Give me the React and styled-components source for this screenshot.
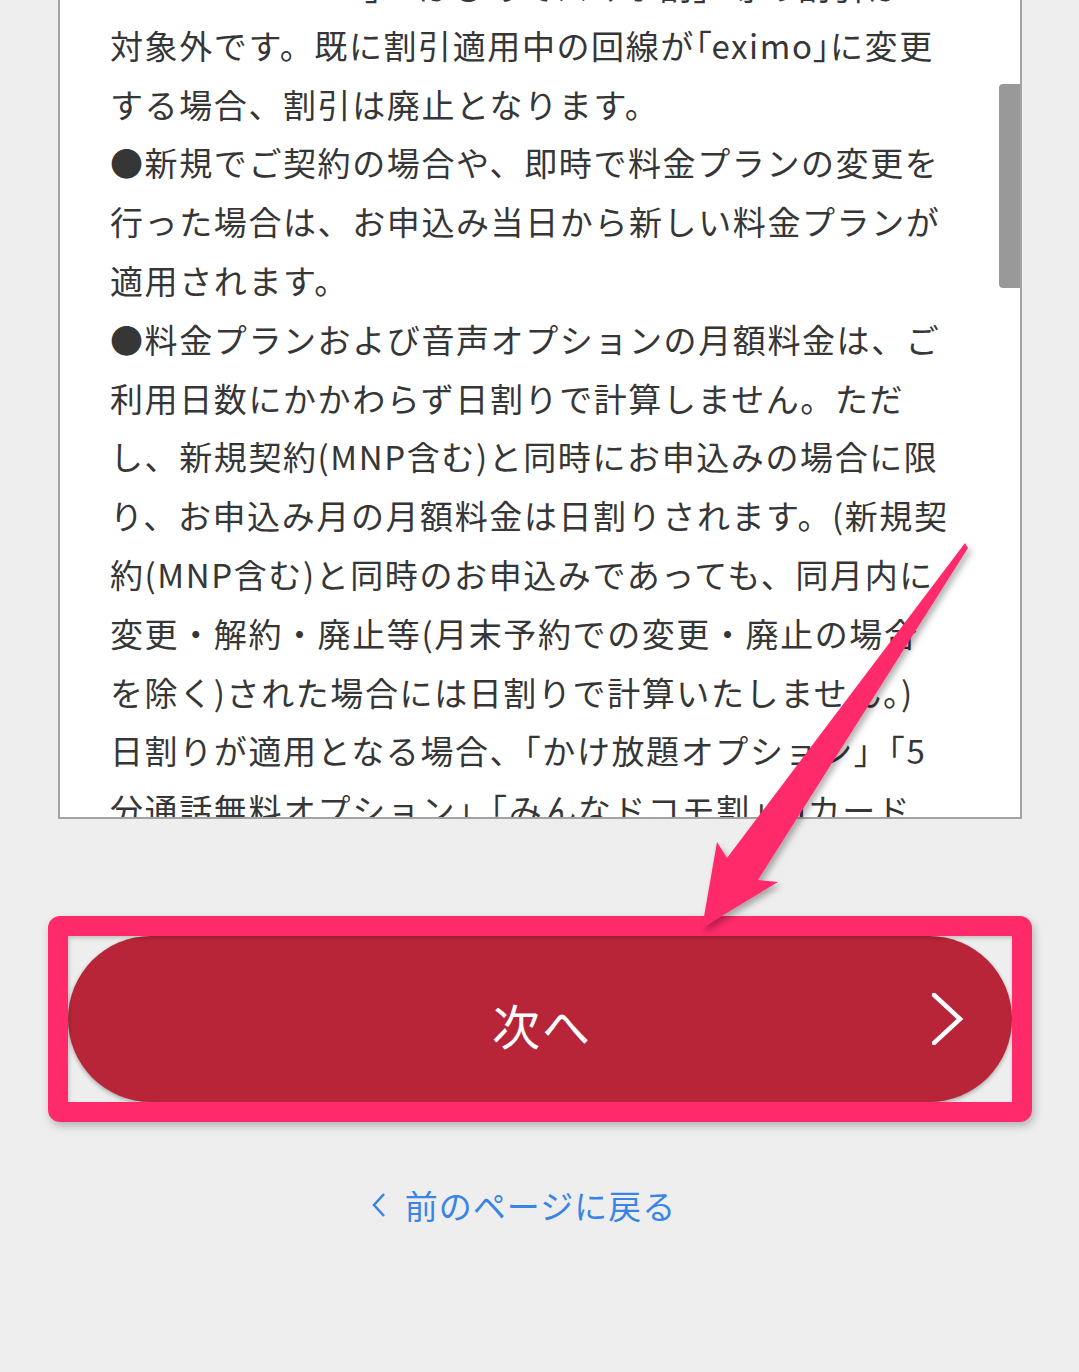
import React from 'react';
import styled, { createGlobalStyle } from 'styled-components';

const GlobalStyle = createGlobalStyle`
  html, body {
    margin: 0;
    padding: 0;
    background: #eeeeee;
  }
  body {
    font-family: "Noto Sans CJK JP", "Noto Sans", sans-serif;
  }
`;

// 約款テキスト（スクロール途中の表示）
const termsLines = [
  '「docomo with」「はじめてスマホ割」等の割引は',
  <>
    対象外です。既に割引適用中の回線が<Prop>「</Prop>eximo<Prop>」</Prop>に変更
  </>,
  'する場合、割引は廃止となります。',
  '●新規でご契約の場合や、即時で料金プランの変更を',
  '行った場合は、お申込み当日から新しい料金プランが',
  '適用されます。',
  '●料金プランおよび音声オプションの月額料金は、ご',
  '利用日数にかかわらず日割りで計算しません。ただ',
  'し、新規契約(MNP含む)と同時にお申込みの場合に限',
  'り、お申込み月の月額料金は日割りされます。(新規契',
  '約(MNP含む)と同時のお申込みであっても、同月内に',
  '変更・解約・廃止等(月末予約での変更・廃止の場合',
  'を除く)された場合には日割りで計算いたしません。)',
  '日割りが適用となる場合、「かけ放題オプション」「5',
  '分通話無料オプション」「みんなドコモ割」dカード',
];

function Prop({ children }) {
  return <PropSpan>{children}</PropSpan>;
}

function App() {
  return (
    <>
      <GlobalStyle />
      <Page>
        <TermsBox>
          <TermsText>
            {termsLines.map((line, i) => (
              <TermsLine key={i}>{line}</TermsLine>
            ))}
          </TermsText>
          <ScrollThumb />
        </TermsBox>

        <ButtonArea>
          <NextButton type="button">
            <span>次へ</span>
            <ChevronIcon viewBox="0 0 32 52">
              <polyline points="2,2 28,26 2,50" />
            </ChevronIcon>
          </NextButton>
          <HighlightFrame />
        </ButtonArea>

        <BackLink href="#">
          <BackIcon viewBox="0 0 16 26">
            <polyline points="13,2 3,13 13,24" />
          </BackIcon>
          前のページに戻る
        </BackLink>

        <ArrowMark viewBox="0 0 1079 1372">
          <defs>
            <filter id="arrowShadow" x="-20%" y="-20%" width="140%" height="140%">
              <feDropShadow dx="3" dy="4" stdDeviation="3" floodColor="#000" floodOpacity="0.3" />
            </filter>
          </defs>
          <polygon
            points="965,543 968,548 758,880 778,882 702,928 717,842 727,858"
            fill="#ff2a6a"
            filter="url(#arrowShadow)"
          />
        </ArrowMark>
      </Page>
    </>
  );
}

const Page = styled.div`
  position: relative;
  width: 1079px;
  height: 1372px;
  overflow: hidden;
  background: #eeeeee;
`;

const TermsBox = styled.div`
  position: relative;
  box-sizing: border-box;
  margin: 0 57px 0 58px;
  height: 819px;
  background: #ffffff;
  border: 2px solid #a3a3a3;
  border-top: none;
  overflow: hidden;
`;

const TermsText = styled.div`
  margin-top: -43px;
  padding-left: 50px;
  color: #363636;
  font-size: 33px;
  letter-spacing: 1.6px;
  line-height: 58.8px;
`;

const TermsLine = styled.div`
  white-space: nowrap;
`;

const PropSpan = styled.span`
  font-feature-settings: "palt";
  letter-spacing: 0;
`;

const ScrollThumb = styled.div`
  position: absolute;
  right: 0;
  top: 84px;
  width: 21px;
  height: 204px;
  background: #999999;
  border-radius: 4px 0 0 4px;
`;

const ButtonArea = styled.div`
  position: relative;
  margin: 117px 67px 0 68px;
`;

const NextButton = styled.button`
  position: relative;
  display: flex;
  align-items: center;
  justify-content: center;
  width: 100%;
  height: 166px;
  border: none;
  border-radius: 83px;
  background: #b82538;
  color: #ffffff;
  font-family: "Noto Sans CJK JP", "Noto Sans", sans-serif;
  font-size: 48px;
  letter-spacing: 2px;
  box-shadow: 0 2px 4px rgba(0, 0, 0, 0.3);
  cursor: pointer;

  span {
    margin-left: 4px;
    padding-top: 10px;
  }
`;

const ChevronIcon = styled.svg`
  position: absolute;
  right: 48px;
  top: 57px;
  width: 32px;
  height: 52px;

  polyline {
    fill: none;
    stroke: #ffffff;
    stroke-width: 4.5;
    stroke-linecap: square;
  }
`;

const HighlightFrame = styled.div`
  position: absolute;
  left: -20px;
  right: -20px;
  top: -20px;
  bottom: -20px;
  border: 20px solid #ff2a6a;
  border-radius: 12px;
  box-shadow: 2px 4px 8px rgba(0, 0, 0, 0.25), inset 1px 2px 4px rgba(0, 0, 0, 0.2);
  pointer-events: none;
`;

const BackLink = styled.a`
  display: flex;
  align-items: center;
  justify-content: center;
  gap: 18px;
  margin: 78px auto 0;
  width: fit-content;
  padding-right: 32px;
  color: #3a84e6;
  font-size: 33px;
  letter-spacing: 1px;
  line-height: 50px;
  text-decoration: none;
`;

const BackIcon = styled.svg`
  width: 16px;
  height: 26px;

  polyline {
    fill: none;
    stroke: #3a84e6;
    stroke-width: 2.5;
  }
`;

const ArrowMark = styled.svg`
  position: absolute;
  left: 0;
  top: 0;
  width: 1079px;
  height: 1372px;
  pointer-events: none;
`;

export default App;
